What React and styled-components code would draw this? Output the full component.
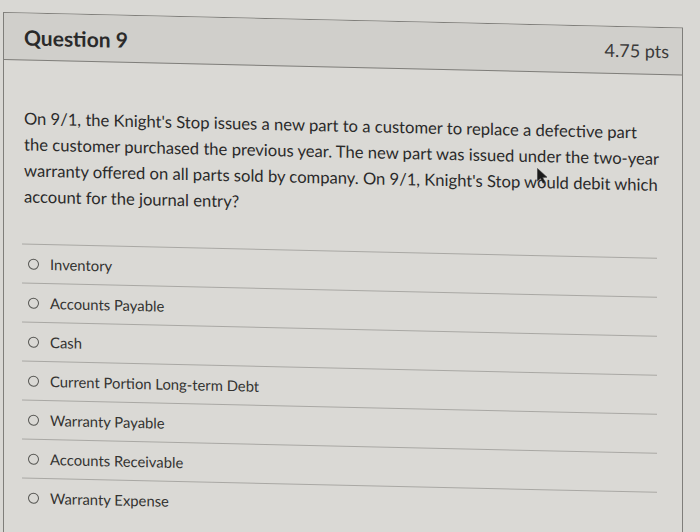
import React from "react";
import styled, { createGlobalStyle } from "styled-components";

const GlobalStyle = createGlobalStyle`
  html, body {
    margin: 0;
    padding: 0;
    background: #d9d8d4;
    overflow: hidden;
  }
  body {
    font-family: Lato, "Open Sans", "Liberation Sans", sans-serif;
  }
`;

const Page = styled.div`
  position: relative;
  width: 700px;
  height: 532px;
  overflow: hidden;
  background: #d9d8d4;
`;

const Card = styled.section`
  margin: 12px 0 0 3px;
  width: 678px;
  border: 1px solid #7f7e7a;
  background: #dad9d5;
  transform: skewY(1.3deg);
  transform-origin: 0 0;
  padding-bottom: 80px;
`;

const Header = styled.header`
  height: 46px;
  display: flex;
  align-items: center;
  justify-content: space-between;
  padding: 0 13px 0 20px;
  background: #d0cfcb;
  border-bottom: 1px solid #7f7e7a;
`;

const Title = styled.h2`
  margin: 0;
  font-size: 21px;
  font-weight: 700;
  color: #2a2a2a;
`;

const Points = styled.span`
  font-size: 18px;
  color: #3a3a3a;
`;

const Body = styled.div`
  padding: 45px 2px 0 20px;
`;

const QuestionText = styled.p`
  margin: 0 0 34px 0;
  font-size: 16.6px;
  line-height: 26px;
  color: #2a2a2a;
  white-space: nowrap;
`;

const Answers = styled.ul`
  list-style: none;
  margin: 0 23px 0 -2px;
  padding: 0;
`;

const Answer = styled.li`
  height: 38px;
  display: flex;
  align-items: center;
  gap: 11px;
  padding-left: 6px;
  border-top: 1px solid #a9a8a4;
`;

const Radio = styled.span`
  width: 11px;
  height: 11px;
  box-sizing: border-box;
  border: 1.5px solid #555552;
  border-radius: 50%;
  flex: none;
`;

const Label = styled.span`
  font-size: 14.8px;
  color: #333331;
`;

const Cursor = styled.svg`
  position: absolute;
  left: 537px;
  top: 168px;
  width: 12px;
  height: 16px;
`;

const options = [
  "Inventory",
  "Accounts Payable",
  "Cash",
  "Current Portion Long-term Debt",
  "Warranty Payable",
  "Accounts Receivable",
  "Warranty Expense",
];

export default function App() {
  return (
    <Page>
      <GlobalStyle />
      <Card>
        <Header>
          <Title>Question 9</Title>
          <Points>4.75 pts</Points>
        </Header>
        <Body>
          <QuestionText>
            On 9/1, the Knight's Stop issues a new part to a customer to replace a defective part
            <br />
            the customer purchased the previous year. The new part was issued under the two-year
            <br />
            warranty offered on all parts sold by company. On 9/1, Knight's Stop would debit which
            <br />
            account for the journal entry?
          </QuestionText>
          <Answers>
            {options.map((o) => (
              <Answer key={o}>
                <Radio />
                <Label>{o}</Label>
              </Answer>
            ))}
          </Answers>
        </Body>
      </Card>
      <Cursor viewBox="0 0 12 16">
        <path d="M0.5 0.5 L0.5 13 L3.6 10.2 L6 15.2 L8 14.3 L5.7 9.4 L10 9.2 Z" fill="#1b1b1b" stroke="#3a3a3a" strokeWidth="0.6" strokeLinejoin="round" />
      </Cursor>
    </Page>
  );
}
